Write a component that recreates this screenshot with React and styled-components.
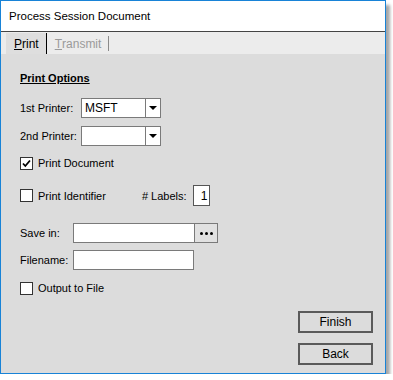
import React from "react";
import styled, { createGlobalStyle } from "styled-components";

const GlobalStyle = createGlobalStyle`
  html, body {
    margin: 0;
    padding: 0;
    background: #ffffff;
  }
  body {
    font-family: "Liberation Sans", Arial, sans-serif;
    font-size: 11px;
    color: #000;
  }
`;

const App = () => {
  return (
    <>
      <GlobalStyle />
      <Window>
        <TitleBar>Process Session Document</TitleBar>

        <TabStrip>
          <Tab active>
            <u>P</u>rint
          </Tab>
          <Tab>
            <u>T</u>ransmit
          </Tab>
        </TabStrip>

        <Body>
          <SectionTitle>Print Options</SectionTitle>

          <FieldRow top={13}>
            <Label width={61}>1st Printer:</Label>
            <Combo>
              <ComboText>MSFT</ComboText>
              <ComboButton>
                <Arrow />
              </ComboButton>
            </Combo>
          </FieldRow>

          <FieldRow top={8}>
            <Label width={61}>2nd Printer:</Label>
            <Combo>
              <ComboText />
              <ComboButton>
                <Arrow />
              </ComboButton>
            </Combo>
          </FieldRow>

          <CheckRow top={10}>
            <CheckBox>
              <svg width="11" height="11" viewBox="0 0 11 11">
                <path
                  d="M2 5.5 L4.3 8 L9 2.5"
                  fill="none"
                  stroke="#000"
                  strokeWidth="1.8"
                />
              </svg>
            </CheckBox>
            Print Document
          </CheckRow>

          <FieldRow top={15}>
            <CheckRow>
              <CheckBox />
              Print Identifier
            </CheckRow>
            <LabelsGroup>
              # Labels:
              <SmallBox>1</SmallBox>
            </LabelsGroup>
          </FieldRow>

          <FieldRow top={17}>
            <Label width={53}>Save in:</Label>
            <TextBox width={120} />
            <BrowseButton>
              <Dots>
                <i />
                <i />
                <i />
              </Dots>
            </BrowseButton>
          </FieldRow>

          <FieldRow top={7}>
            <Label width={53}>Filename:</Label>
            <TextBox width={119} />
          </FieldRow>

          <CheckRow top={11}>
            <CheckBox />
            Output to File
          </CheckRow>

          <ButtonColumn>
            <DialogButton>Finish</DialogButton>
            <DialogButton>Back</DialogButton>
          </ButtonColumn>
        </Body>
      </Window>
    </>
  );
};

export default App;

const Window = styled.div`
  width: 384px;
  height: 372px;
  border: 1px solid #1883d7;
  display: flex;
  flex-direction: column;
  background: #dcdcdc;
  box-shadow: 4px 5px 3px rgba(0, 0, 0, 0.35);
`;

const TitleBar = styled.div`
  height: 30px;
  background: #ffffff;
  border-bottom: 1px solid #444;
  display: flex;
  align-items: center;
  padding-left: 8px;
  font-size: 11.5px;
  color: #000;
`;

const TabStrip = styled.div`
  height: 22px;
  background: #ececec;
  display: flex;
  align-items: stretch;
  padding-left: 5px;
`;

const Tab = styled.div`
  display: flex;
  align-items: center;
  padding: 1px 7px 0 8px;
  margin-top: 1px;
  color: ${(p) => (p.active ? "#000" : "#9a9a9a")};
  background: ${(p) => (p.active ? "#dedede" : "transparent")};
  border-right: 1px solid ${(p) => (p.active ? "#000" : "#8a8a8a")};
  font-size: 12px;

  ${(p) =>
    !p.active &&
    `
    border-right-color: transparent;
    position: relative;
    &::after {
      content: "";
      position: absolute;
      right: -1px;
      top: 3px;
      bottom: 3px;
      width: 1px;
      background: #8a8a8a;
    }
  `}
`;

const Body = styled.div`
  flex: 1;
  padding: 17px 12px 0 19px;
  display: flex;
  flex-direction: column;
`;

const SectionTitle = styled.div`
  font-weight: 700;
  text-decoration: underline;
  height: 14px;
  line-height: 14px;
`;

const FieldRow = styled.div`
  display: flex;
  align-items: center;
  margin-top: ${(p) => p.top || 0}px;
`;

const Label = styled.div`
  width: ${(p) => p.width}px;
  flex-shrink: 0;
`;

const Combo = styled.div`
  width: 78px;
  height: 18px;
  border: 1px solid #7a7a7a;
  background: #fff;
  display: flex;
`;

const ComboText = styled.div`
  flex: 1;
  padding-left: 3px;
  line-height: 18px;
  font-size: 12px;
`;

const ComboButton = styled.div`
  width: 14px;
  border-left: 1px solid #7a7a7a;
  background: #fff;
  display: flex;
  align-items: center;
  justify-content: center;
`;

const Arrow = styled.div`
  width: 0;
  height: 0;
  border-left: 4px solid transparent;
  border-right: 4px solid transparent;
  border-top: 4px solid #000;
`;

const CheckRow = styled.div`
  display: flex;
  align-items: center;
  margin-top: ${(p) => p.top || 0}px;
  height: 14px;
`;

const CheckBox = styled.div`
  width: 11px;
  height: 11px;
  border: 1px solid #333;
  background: #fff;
  margin-right: 5px;
  display: flex;
  align-items: center;
  justify-content: center;
`;

const LabelsGroup = styled.div`
  margin-left: 36px;
  display: flex;
  align-items: center;
  gap: 6px;
`;

const SmallBox = styled.div`
  width: 17px;
  height: 21px;
  box-sizing: border-box;
  border: 1px solid #555;
  background: #fff;
  display: flex;
  align-items: center;
  justify-content: flex-end;
  padding-right: 1px;
  font-size: 12px;
`;

const TextBox = styled.div`
  width: ${(p) => p.width}px;
  height: 18px;
  border: 1px solid #7a7a7a;
  background: #fff;
`;

const BrowseButton = styled.div`
  width: 22px;
  height: 18px;
  border: 1px solid #7a7a7a;
  border-left: none;
  background: #e1e1e1;
  display: flex;
  align-items: center;
  justify-content: center;
`;

const Dots = styled.div`
  display: flex;
  gap: 2px;

  i {
    width: 3px;
    height: 3px;
    border-radius: 50%;
    background: #000;
  }
`;

const ButtonColumn = styled.div`
  margin-top: 16px;
  display: flex;
  flex-direction: column;
  align-items: flex-end;
  gap: 10px;
`;

const DialogButton = styled.div`
  width: 71px;
  height: 18px;
  border: 2px solid #5a5a5a;
  background: #dcdcdc;
  display: flex;
  align-items: center;
  justify-content: center;
  font-size: 12px;
`;
